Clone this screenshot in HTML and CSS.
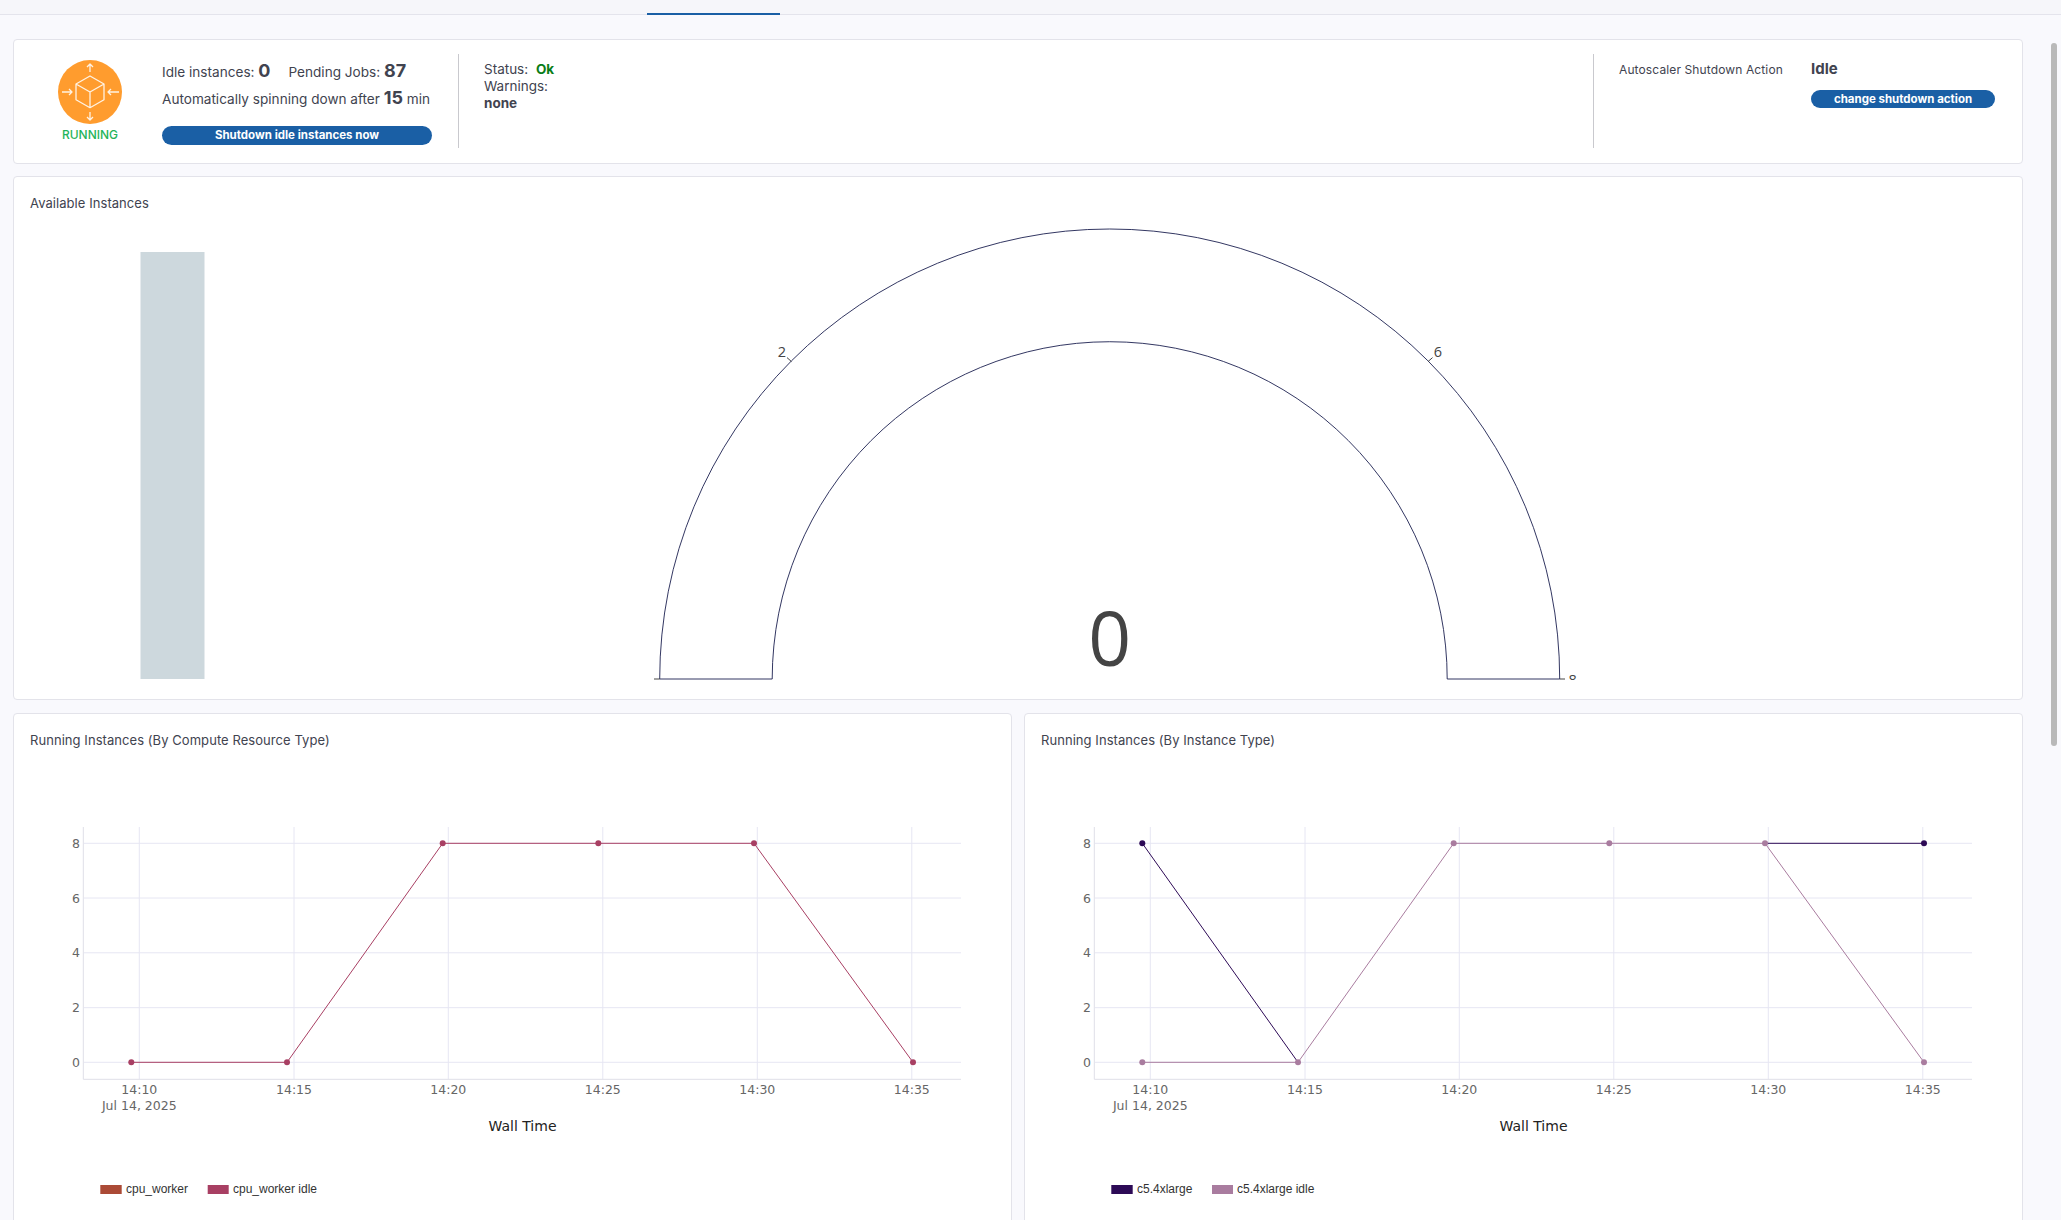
FILE: index.html
```html
<!DOCTYPE html>
<html lang="en">
<head>
<meta charset="utf-8">
<title>Autoscaler</title>
<link rel="stylesheet" href="styles.css">
</head>
<body>
<header class="topbar"><div class="tab-active"></div></header>
<main class="content">
  <section class="card summary">
    <div class="state">
      <svg class="orb" viewBox="-32 -32 64 64" width="64" height="64" aria-hidden="true">
        <circle class="orb-bg" cx="0" cy="0" r="32"/>
        <g class="orb-line">
          <path d="M0-16 14-8V7.7L0 15.7-14 7.7V-8ZM-14-8 0 0 14-8M0 0V15.7"/>
          <path d="M0-20V-28M-3-25 0-28 3-25"/>
          <path d="M0 20V28M-3 25 0 28 3 25"/>
          <path d="M-28 0H-18M-21-3-18 0-21 3"/>
          <path d="M29 0H18M21-3 18 0 21 3"/>
        </g>
      </svg>
      <div class="state-label">RUNNING</div>
    </div>
    <div class="stats">
      <div class="stat-row"><span>Idle instances:</span> <b class="big">0</b><span class="pending">Pending Jobs:</span> <b class="big">87</b></div>
      <div class="stat-row second"><span>Automatically spinning down after</span> <b class="big">15</b> <span>min</span></div>
      <button class="pill wide">Shutdown idle instances now</button>
    </div>
    <div class="divider"></div>
    <div class="status">
      <div>Status: <b class="ok">Ok</b></div>
      <div>Warnings:</div>
      <div><b>none</b></div>
    </div>
    <div class="divider"></div>
    <div class="action">
      <div class="action-label">Autoscaler Shutdown Action</div>
      <div class="action-value">
        <b>Idle</b>
        <button class="pill">change shutdown action</button>
      </div>
    </div>
  </section>

  <section class="card gauge-card">
    <h2 class="card-title">Available Instances</h2>
    <svg class="gauge" viewBox="14 211 2008 488" width="2008" height="488">
      <defs>
        <clipPath id="gauge-plot"><rect x="14" y="211" width="2008" height="469"/></clipPath>
      </defs>
      <rect class="bar" x="140.5" y="252" width="64" height="427"/>
      <path class="arc" d="M659.7 679A450 450 0 0 1 1559.7 679H1447.2A337.5 337.5 0 0 0 772.2 679Z"/>
      <path class="tick" d="M654 679H659.7M1559.7 679H1565M787 357.6 791.5 361.6M1428 361.6 1432.5 357.6"/>
      <text class="gauge-tick" x="782" y="357" text-anchor="middle">2</text>
      <text class="gauge-tick" x="1438" y="357" text-anchor="middle">6</text>
      <g clip-path="url(#gauge-plot)">
        <text class="gauge-tick" x="1572.6" y="684.7" text-anchor="middle">8</text>
      </g>
      <text class="gauge-num" x="1109.7" y="665.5" text-anchor="middle">0</text>
    </svg>
  </section>

  <div class="charts">
    <section class="card chart-card">
      <h2 class="card-title">Running Instances (By Compute Resource Type)</h2>
      <svg class="chart" viewBox="14 748 996 472" width="996" height="472">
        <g class="grid">
          <path d="M84 843.3H961M84 898H961M84 952.8H961M84 1007.7H961M84 1062.3H961"/>
          <path d="M139.3 827V1079M294 827V1079M448.3 827V1079M602.8 827V1079M757.3 827V1079M911.8 827V1079"/>
        </g>
        <path class="axis" d="M83.3 827V1079.3H961"/>
        <g class="ylab">
          <text x="80" y="847.8">8</text><text x="80" y="902.5">6</text><text x="80" y="957.3">4</text><text x="80" y="1012.2">2</text><text x="80" y="1066.8">0</text>
        </g>
        <g class="xlab">
          <text x="139.3" y="1094.2">14:10</text><text x="139.3" y="1110.2">Jul 14, 2025</text><text x="294" y="1094.2">14:15</text><text x="448.3" y="1094.2">14:20</text><text x="602.8" y="1094.2">14:25</text><text x="757.3" y="1094.2">14:30</text><text x="911.8" y="1094.2">14:35</text>
        </g>
        <text class="xtitle" x="522.5" y="1130.5">Wall Time</text>
        <polyline class="line rose" points="131.3,1062.3 287,1062.3 442.7,843.3 598.3,843.3 754,843.3 913,1062.3"/>
        <g class="dots rose-dots">
          <circle cx="131.3" cy="1062.3" r="3"/><circle cx="287" cy="1062.3" r="3"/><circle cx="442.7" cy="843.3" r="3"/><circle cx="598.3" cy="843.3" r="3"/><circle cx="754" cy="843.3" r="3"/><circle cx="913" cy="1062.3" r="3"/>
        </g>
        <rect class="sw-brick" x="100.3" y="1185" width="21.4" height="9"/>
        <text class="legend" x="126" y="1193.2">cpu_worker</text>
        <rect class="sw-rose" x="207.7" y="1185" width="21" height="9"/>
        <text class="legend" x="233" y="1193.2">cpu_worker idle</text>
      </svg>
    </section>
    <section class="card chart-card">
      <h2 class="card-title">Running Instances (By Instance Type)</h2>
      <svg class="chart" viewBox="14 748 996 472" width="996" height="472">
        <g class="grid">
          <path d="M84 843.3H961M84 898H961M84 952.8H961M84 1007.7H961M84 1062.3H961"/>
          <path d="M139.3 827V1079M294 827V1079M448.3 827V1079M602.8 827V1079M757.3 827V1079M911.8 827V1079"/>
        </g>
        <path class="axis" d="M83.3 827V1079.3H961"/>
        <g class="ylab">
          <text x="80" y="847.8">8</text><text x="80" y="902.5">6</text><text x="80" y="957.3">4</text><text x="80" y="1012.2">2</text><text x="80" y="1066.8">0</text>
        </g>
        <g class="xlab">
          <text x="139.3" y="1094.2">14:10</text><text x="139.3" y="1110.2">Jul 14, 2025</text><text x="294" y="1094.2">14:15</text><text x="448.3" y="1094.2">14:20</text><text x="602.8" y="1094.2">14:25</text><text x="757.3" y="1094.2">14:30</text><text x="911.8" y="1094.2">14:35</text>
        </g>
        <text class="xtitle" x="522.5" y="1130.5">Wall Time</text>
        <path class="line plum" d="M131.3 843.3 287 1062.3M754 843.3H913"/>
        <g class="dots plum-dots">
          <circle cx="131.3" cy="843.3" r="3"/><circle cx="913" cy="843.3" r="3"/>
        </g>
        <polyline class="line mauve" points="131.3,1062.3 287,1062.3 442.7,843.3 598.3,843.3 754,843.3 913,1062.3"/>
        <g class="dots mauve-dots">
          <circle cx="131.3" cy="1062.3" r="3"/><circle cx="287" cy="1062.3" r="3"/><circle cx="442.7" cy="843.3" r="3"/><circle cx="598.3" cy="843.3" r="3"/><circle cx="754" cy="843.3" r="3"/><circle cx="913" cy="1062.3" r="3"/>
        </g>
        <rect class="sw-plum" x="100.3" y="1185" width="21.4" height="9"/>
        <text class="legend" x="126" y="1193.2">c5.4xlarge</text>
        <rect class="sw-mauve" x="201" y="1185" width="21" height="9"/>
        <text class="legend" x="226" y="1193.2">c5.4xlarge idle</text>
      </svg>
    </section>
  </div>
</main>
<div class="scroll-thumb"></div>
</body>
</html>
```
FILE: styles.css
```css
* { box-sizing: border-box; }
html, body { margin: 0; height: 1220px; overflow: hidden; }
body {
  background: #f9f9fd;
  color: #41434f;
  font-family: "Inter", "Liberation Sans", sans-serif;
  font-size: 13px;
  position: relative;
}
.topbar {
  height: 15px;
  background: #f6f6fa;
  border-bottom: 1px solid #e4e4ec;
  position: relative;
}
.tab-active {
  position: absolute;
  left: 647px;
  width: 133px;
  bottom: -1px;
  height: 2px;
  background: #1a5fa5;
}
.content {
  padding: 24px 38px 0 13px;
  display: flex;
  flex-direction: column;
  gap: 12px;
}
.card {
  background: #fff;
  border: 1px solid #e3e3ea;
  border-radius: 4px;
}
.summary {
  height: 125px;
  display: flex;
  padding: 14px 27px 15px 16px;
}
.state {
  width: 120px;
  display: flex;
  flex-direction: column;
  align-items: center;
  padding-top: 6px;
}
.orb { display: block; }
.orb-bg { fill: #ff9c2e; }
.orb-line { fill: none; stroke: #fff2e2; stroke-width: 1.3; stroke-linejoin: round; }
.state-label {
  margin-top: 3px;
  color: #1fb45a;
  font-size: 12px;
  font-weight: 500;
  line-height: 15px;
}
.stats { width: 270px; margin-left: 12px; padding-top: 8px; font-size: 13.6px; }
.stat-row { height: 18px; line-height: 18px; white-space: nowrap; }
.stat-row.second { margin-top: 9px; }
.big { font-size: 18px; font-weight: 700; }
.pending { margin-left: 18px; }
.pill {
  display: block;
  width: 100%;
  border: 0;
  border-radius: 10px;
  background: #1a5fa5;
  color: #fff;
  font-family: inherit;
  font-size: 11.5px;
  font-weight: 700;
  text-align: center;
  padding: 0;
  height: 18px;
  line-height: 18px;
}
.wide { margin-top: 19px; height: 19px; line-height: 19px; }
.divider { width: 1px; background: #c9c9ce; margin-left: 26px; }
.status { flex: 1; margin-left: 25px; padding-top: 7px; font-size: 13.5px; line-height: 17px; }
.status b { font-weight: 700; }
.ok { color: #0a7d17; margin-left: 4px; }
.action { display: flex; margin-left: 25px; padding-top: 7px; }
.action-label { width: 192px; font-size: 12px; line-height: 17px; letter-spacing: .12px; }
.action-value { width: 184px; font-size: 15px; line-height: 16px; }
.action-value b { font-weight: 700; display: block; margin-bottom: 13px; }
.card-title {
  margin: 0;
  font-size: 13px;
  font-weight: 400;
  line-height: 16px;
  letter-spacing: .06px;
  padding: 18px 0 0 16px;
}
.gauge-card { height: 524px; margin-bottom: 1px; }
.gauge { display: block; }
.bar { fill: #cdd8dd; }
.arc { fill: #fff; stroke: #1c2050; stroke-width: .9; }
.tick { fill: none; stroke: #444; stroke-width: 1; }
.gauge-tick { font-family: "Open Sans", sans-serif; font-size: 14.5px; fill: #444; }
.gauge-num { font-family: "Open Sans", sans-serif; font-size: 75px; fill: #444; }
.charts { display: grid; grid-template-columns: 999px 999px; gap: 12px; }
.chart-card { height: 600px; }
.chart { display: block; }
.grid path { fill: none; stroke: #e6e6f3; stroke-width: 1; }
.axis { fill: none; stroke: #dfdfe8; stroke-width: 1; }
.ylab text { font-family: "DejaVu Sans", sans-serif; font-size: 12.5px; fill: #666; text-anchor: end; }
.xlab text { font-family: "DejaVu Sans", sans-serif; font-size: 12.5px; fill: #666; text-anchor: middle; }
.xtitle { font-family: "DejaVu Sans", sans-serif; font-size: 14px; fill: #222; text-anchor: middle; }
.legend { font-family: "Liberation Sans", sans-serif; font-size: 12px; fill: #333; }
.line { fill: none; stroke-width: 1; }
.rose { stroke: #a83f63; }
.plum { stroke: #2d0a56; }
.mauve { stroke: #a97c9f; }
.rose-dots { fill: #a83f63; }
.plum-dots { fill: #2d0a56; }
.mauve-dots { fill: #a97c9f; }
.sw-brick { fill: #ab4a36; }
.sw-rose { fill: #a83f63; }
.sw-plum { fill: #2d0a56; }
.sw-mauve { fill: #a97c9f; }
.scroll-thumb {
  position: absolute;
  left: 2051px;
  top: 43px;
  width: 6px;
  height: 703px;
  border-radius: 3px;
  background: #b9b9b9;
}
```
